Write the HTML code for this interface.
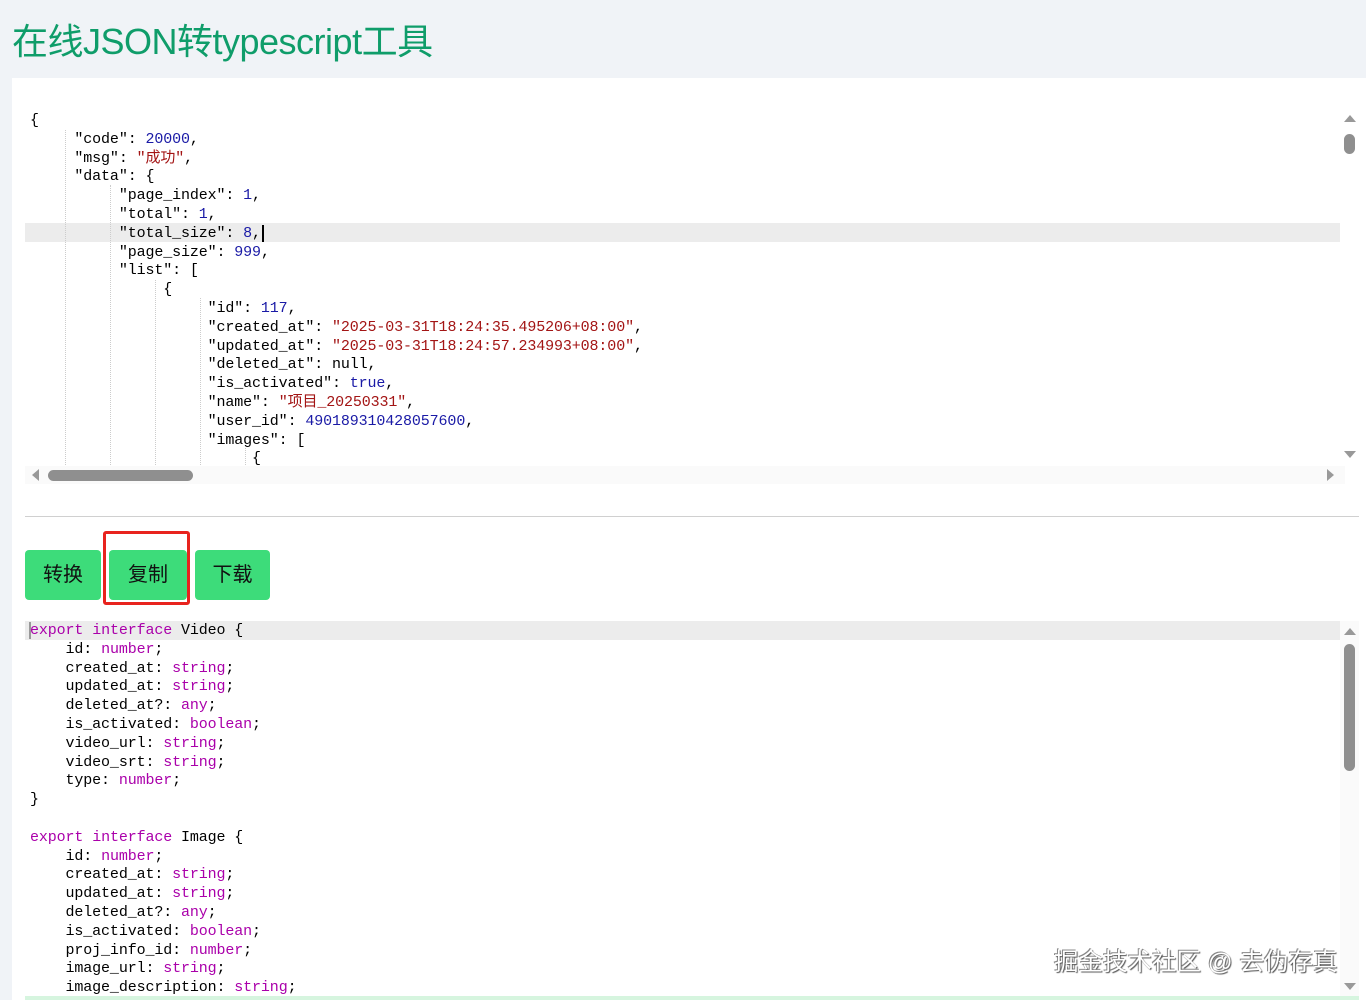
<!DOCTYPE html>
<html><head><meta charset="utf-8"><style>
body{margin:0;background:#f0f3f7;width:1366px;height:1000px;overflow:hidden;font-family:"Liberation Sans","Noto Sans CJK SC",sans-serif}
h1{position:absolute;left:12px;top:13px;margin:0;font-size:36px;font-weight:normal;color:#0f9d6a;letter-spacing:-0.5px}
.panel{position:absolute;left:12px;top:78px;width:1354px;height:922px;background:#fff}
.code{position:absolute;font-family:"Liberation Mono","Noto Sans CJK SC",monospace;font-size:15px;line-height:18.8px;white-space:pre;color:#000;letter-spacing:-0.12px}
.n{color:#1a1aa6}.s{color:#a31515}.k{color:#a0a}.b{color:#1a1aa6}.t{color:#a0a}
.hl{position:absolute;background:#ececec}
.btn{position:absolute;top:550px;height:50px;background:#3ddc7a;border-radius:4px;font-size:20px;color:#111;text-align:center;line-height:50px}
.g{position:absolute;width:0;border-left:1px dotted #ccc}
</style></head><body>
<h1>在线JSON转typescript工具</h1>
<div class="panel"></div>
<div class="hl" style="left:25px;top:223px;width:1315px;height:19px"></div>
<div class="g" style="left:65px;top:130px;height:335px"></div>
<div class="g" style="left:110px;top:185px;height:280px"></div>
<div class="g" style="left:155px;top:280px;height:185px"></div>
<div class="g" style="left:200px;top:298px;height:167px"></div>
<div class="g" style="left:245px;top:448px;height:17px"></div>
<div class="code" style="left:30px;top:112px">{
     "code": <span class="n">20000</span>,
     "msg": <span class="s">"成功"</span>,
     "data": {
          "page_index": <span class="n">1</span>,
          "total": <span class="n">1</span>,
          "total_size": <span class="n">8</span>,<span style="border-left:2px solid #000;margin-left:1px"></span>
          "page_size": <span class="n">999</span>,
          "list": [
               {
                    "id": <span class="n">117</span>,
                    "created_at": <span class="s">"2025-03-31T18:24:35.495206+08:00"</span>,
                    "updated_at": <span class="s">"2025-03-31T18:24:57.234993+08:00"</span>,
                    "deleted_at": null,
                    "is_activated": <span class="b">true</span>,
                    "name": <span class="s">"项目_20250331"</span>,
                    "user_id": <span class="n">490189310428057600</span>,
                    "images": [
                         {</div>
<div style="position:absolute;left:25px;top:466px;width:1320px;height:18px;background:#fafafa"></div>
<div style="position:absolute;left:48px;top:470px;width:145px;height:11px;border-radius:6px;background:#8f8f8f"></div>
<div style="position:absolute;left:32px;top:469px;border:6px solid transparent;border-right:7px solid #999;border-left:0"></div>
<div style="position:absolute;left:1327px;top:469px;border:6px solid transparent;border-left:7px solid #999;border-right:0"></div>
<div style="position:absolute;left:1344px;top:115px;border:6px solid transparent;border-bottom:7px solid #999;border-top:0"></div>
<div style="position:absolute;left:1344px;top:134px;width:11px;height:20px;border-radius:6px;background:#8f8f8f"></div>
<div style="position:absolute;left:1344px;top:451px;border:6px solid transparent;border-top:7px solid #999;border-bottom:0"></div>
<div style="position:absolute;left:25px;top:516px;width:1334px;height:1px;background:#d0d0d0"></div>
<div class="btn" style="left:25px;width:76px">转换</div>
<div class="btn" style="left:109px;width:78px">复制</div>
<div class="btn" style="left:195px;width:75px">下载</div>
<div style="position:absolute;left:103px;top:531px;width:81px;height:68px;border:3px solid #e8231e;border-radius:3px"></div>
<div class="hl" style="left:25px;top:621px;width:1315px;height:19px"></div>
<div style="position:absolute;left:29px;top:622px;width:2px;height:17px;background:#999"></div>
<div class="code" style="left:30px;top:622px"><span class="k">export</span> <span class="k">interface</span> Video {
    id: <span class="t">number</span>;
    created_at: <span class="t">string</span>;
    updated_at: <span class="t">string</span>;
    deleted_at?: <span class="t">any</span>;
    is_activated: <span class="t">boolean</span>;
    video_url: <span class="t">string</span>;
    video_srt: <span class="t">string</span>;
    type: <span class="t">number</span>;
}

<span class="k">export</span> <span class="k">interface</span> Image {
    id: <span class="t">number</span>;
    created_at: <span class="t">string</span>;
    updated_at: <span class="t">string</span>;
    deleted_at?: <span class="t">any</span>;
    is_activated: <span class="t">boolean</span>;
    proj_info_id: <span class="t">number</span>;
    image_url: <span class="t">string</span>;
    image_description: <span class="t">string</span>;</div>
<div style="position:absolute;left:1340px;top:621px;width:19px;height:375px;background:#fafafa"></div>
<div style="position:absolute;left:1344px;top:628px;border:6px solid transparent;border-bottom:7px solid #999;border-top:0"></div>
<div style="position:absolute;left:1344px;top:644px;width:11px;height:127px;border-radius:6px;background:#8f8f8f"></div>
<div style="position:absolute;left:1344px;top:983px;border:6px solid transparent;border-top:7px solid #999;border-bottom:0"></div>
<div style="position:absolute;left:25px;top:996px;width:1334px;height:4px;background:#d6f5df"></div>
<div style="position:absolute;left:1054px;top:943px;font-size:24.5px;color:#fff;text-shadow:1px 1px 1px #555,-1px -1px 0 #888">掘金技术社区 @ 去伪存真</div>
</body></html>
